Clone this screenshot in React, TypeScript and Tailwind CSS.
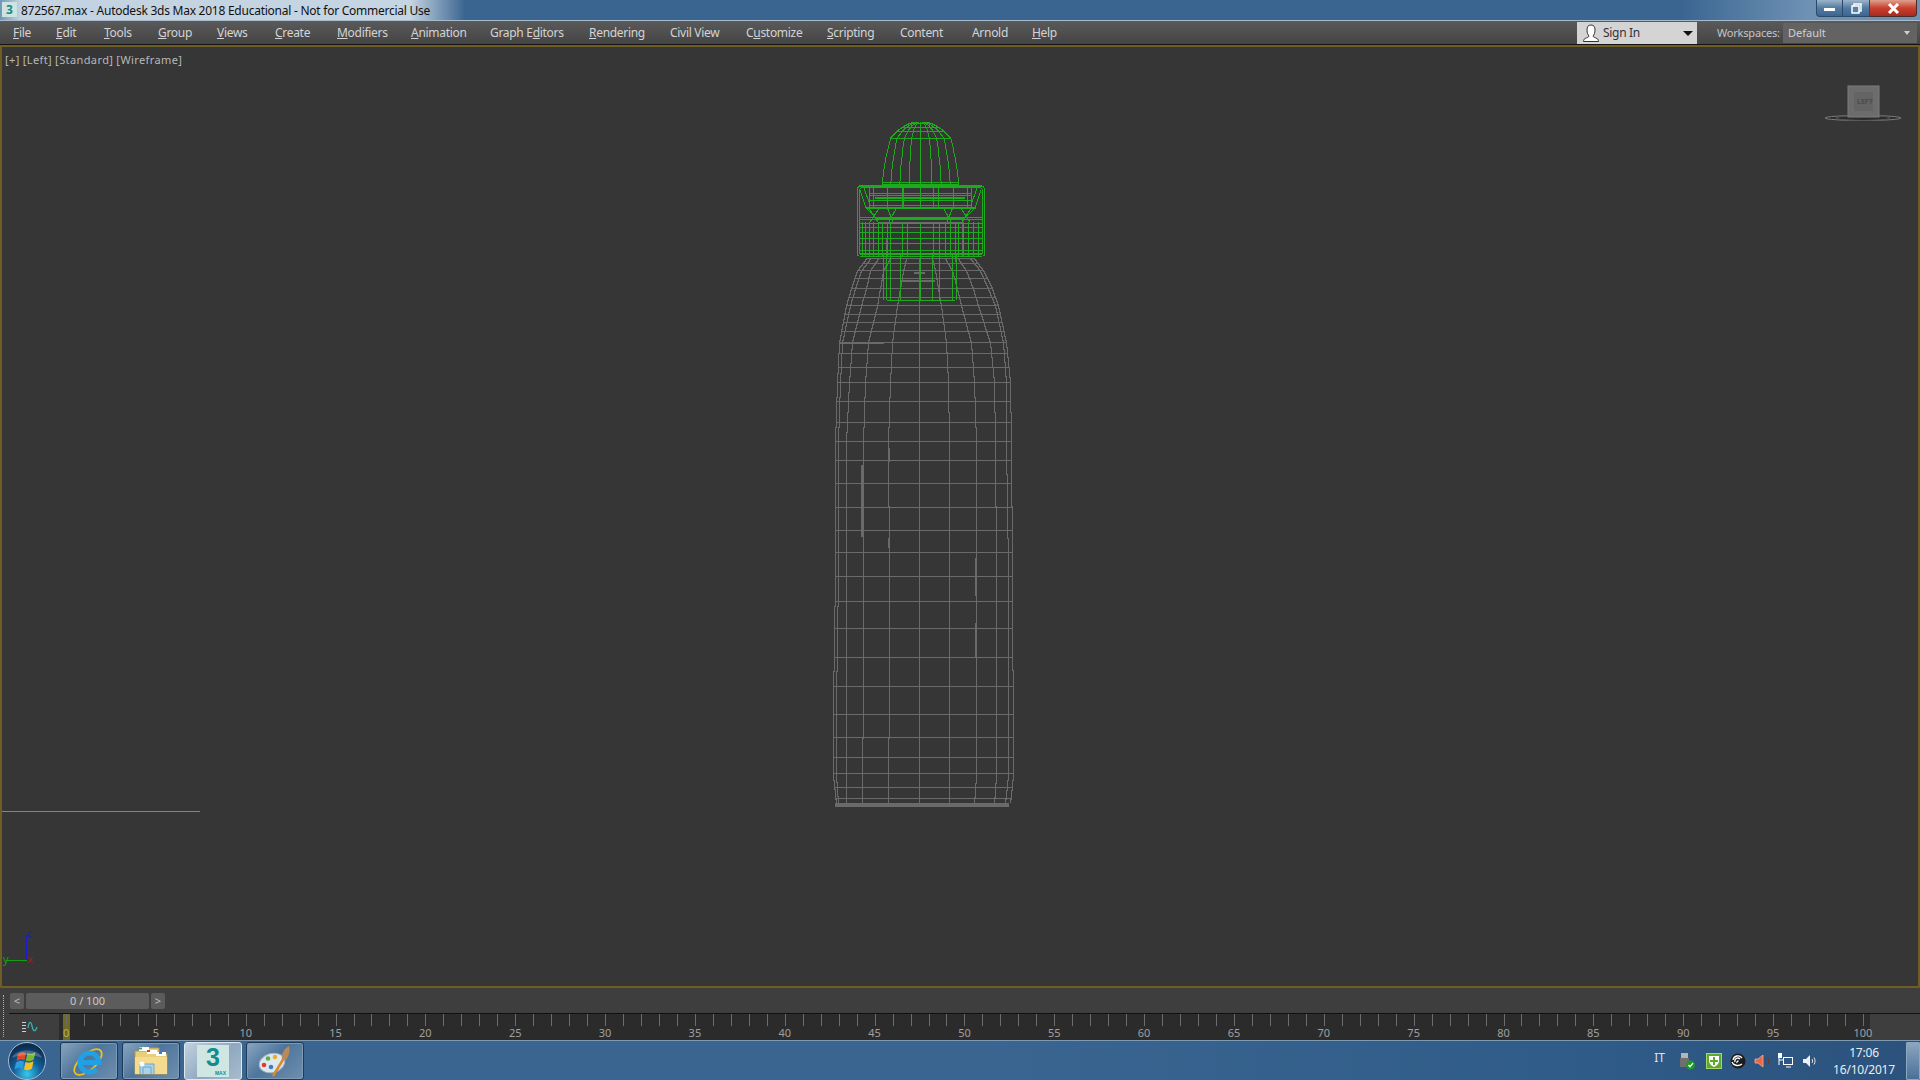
import React from "react";

const FONT = "font-['Noto_Sans','Open_Sans',sans-serif]";

type Key = [number, number];
const interp = (keys: Key[], y: number) => {
  if (y <= keys[0][0]) return keys[0][1];
  for (let i = 1; i < keys.length; i++) {
    if (y <= keys[i][0]) {
      const [y0, x0] = keys[i - 1];
      const [y1, x1] = keys[i];
      return x0 + ((x1 - x0) * (y - y0)) / (y1 - y0);
    }
  }
  return keys[keys.length - 1][1];
};

const Y = [258, 270, 288, 305, 342, 382, 441, 570, 640, 700, 775, 803];
const make = (xs: number[]): Key[] => Y.map((y, i) => [y, xs[i]]);
const columns: Key[][] = [
  make([866, 857, 851, 846, 839, 837, 835, 835, 834, 833, 833, 836]),
  make([870, 861, 855, 850, 842, 840, 838, 838, 837, 836, 836, 838]),
  make([878, 870, 866, 861, 852, 849, 846, 846, 846, 846, 846, 846]),
  make([890, 883, 880, 877, 868, 865, 863, 863, 863, 863, 862, 862]),
  make([906, 903, 900, 897, 892, 890, 888, 889, 889, 889, 888, 888]),
  make([919, 919, 919, 919, 919, 919, 919, 919, 919, 919, 919, 919]),
  make([932, 935, 938, 941, 946, 948, 949, 949, 949, 949, 949, 949]),
  make([945, 952, 957, 961, 971, 974, 976, 976, 976, 976, 976, 974]),
  make([958, 966, 973, 978, 990, 994, 995, 996, 996, 996, 996, 994]),
  make([970, 980, 988, 995, 1003, 1006, 1006, 1008, 1008, 1008, 1008, 1005]),
  make([974, 983, 992, 998, 1006, 1010, 1011, 1012, 1012, 1013, 1013, 1010]),
];
const rows = [
  258, 263, 270, 278, 288, 297, 305, 314, 322, 331, 342, 353, 367, 382, 401, 422, 441, 460, 483, 507, 530, 552, 576,
  601, 628, 657, 686, 714, 737, 757, 773, 787, 798,
];

const stepped = (keys: Key[], from: number, to: number) => {
  let d = "";
  let prev = -1;
  for (let y = from; y <= to; y++) {
    const x = Math.round(interp(keys, y)) + 0.5;
    if (prev < 0) d += `M${x} ${y}`;
    else if (x !== prev) d += `L${prev} ${y}L${x} ${y}`;
    prev = x;
  }
  d += `L${prev} ${to}`;
  return d;
};
const bodyPath = columns.map((c) => stepped(c, 258, 803)).join("");
const rowPath = rows
  .map((y) => `M${Math.round(interp(columns[0], y))} ${y + 0.5}L${Math.round(interp(columns[10], y))} ${y + 0.5}`)
  .join("");

const domeHw: Key[] = [
  [122, 6],
  [124, 12],
  [127, 18],
  [131, 23],
  [138, 30],
  [150, 33],
  [165, 36],
  [182, 38],
];
const domePath = [-1, -0.78, -0.54, -0.3, 0, 0.3, 0.54, 0.78, 1]
  .map((s) => {
    let d = "";
    for (let y = 122; y <= 186; y += 2) {
      const x = Math.round(920 + s * interp(domeHw, y)) + 0.5;
      d += `${d ? "L" : "M"}${x} ${y}`;
    }
    return d;
  })
  .join("");
const domeRows = [123, 127, 131, 138, 182, 184]
  .map((y) => {
    const h = interp(domeHw, y);
    return `M${Math.round(920 - h)} ${y + 0.5}L${Math.round(920 + h)} ${y + 0.5}`;
  })
  .join("");
const capRowsUpper = [193, 195, 200, 205]
  .map((y) => `M870 ${y + 0.5}L972 ${y + 0.5}`)
  .join("");
const capRows = [217, 219, 223, 227, 232, 238, 243, 250]
  .map((y) => `M859 ${y + 0.5}L982 ${y + 0.5}`)
  .join("");
const capLow = [857, 862, 865, 869, 873, 878, 882, 887, 890, 902, 907, 920, 933, 939, 945, 950, 955, 958, 963, 968, 973, 978, 984]
  .map((x) => `M${x + 0.5} 222L${x + 0.5} 256`)
  .join("");
const capUp = [869, 873, 887, 902, 903, 920, 933, 938, 953, 967, 971]
  .map((x) => `M${x + 0.5} 187L${x + 0.5} 208`)
  .join("");
const neck = [883, 886, 890, 900, 920, 932, 939, 952, 956]
  .map((x) => `M${x + 0.5} 254L${x + 0.5} 300`)
  .join("");
const crosses =
  "M868 207L878 222M880 207L870 222M887 207L893 222M897 207L889 222M972 207L962 222M960 207L970 222M953 207L947 222M943 207L951 222M860 190L866 208L875 217M981 190L975 208L966 217M864 188L870 205M977 188L971 205";

const menu: { pre: string; u: string; post: string; w: string }[] = [
  { pre: "", u: "F", post: "ile", w: "w-[43px]" },
  { pre: "", u: "E", post: "dit", w: "w-[48px]" },
  { pre: "", u: "T", post: "ools", w: "w-[54px]" },
  { pre: "", u: "G", post: "roup", w: "w-[59px]" },
  { pre: "", u: "V", post: "iews", w: "w-[58px]" },
  { pre: "", u: "C", post: "reate", w: "w-[62px]" },
  { pre: "", u: "M", post: "odifiers", w: "w-[74px]" },
  { pre: "", u: "A", post: "nimation", w: "w-[79px]" },
  { pre: "Graph E", u: "d", post: "itors", w: "w-[99px]" },
  { pre: "", u: "R", post: "endering", w: "w-[81px]" },
  { pre: "Civil View", u: "", post: "", w: "w-[76px]" },
  { pre: "C", u: "u", post: "stomize", w: "w-[81px]" },
  { pre: "", u: "S", post: "cripting", w: "w-[73px]" },
  { pre: "Content", u: "", post: "", w: "w-[72px]" },
  { pre: "Arnold", u: "", post: "", w: "w-[60px]" },
  { pre: "", u: "H", post: "elp", w: "w-[40px]" },
];

function Wireframe() {
  return (
    <svg className="absolute inset-0 h-full w-full" viewBox="2 47 1916 939" fill="none">
      <g stroke="#6a6a6a" strokeWidth="1" shapeRendering="crispEdges">
        <path d={bodyPath} />
        <path d={rowPath} />
        <path d="M839 342.5L884 342.5" strokeWidth="2" />
        <path d="M862 465L862 537M888.5 448L888.5 462M888.5 538L888.5 548M976 558L976 596M976 623L976 657" strokeWidth="2" />
        <path d="M835 805L1009 805" strokeWidth="4" />
        <path d="M878 222.5L962 222.5M884 238.5L955 238.5M878.5 222L878.5 256M962.5 222L962.5 256M886.5 238L886.5 262M955.5 238L955.5 262" />
        <path d="M902 280.5L935 280.5M914 272.5L925 272.5" strokeWidth="2" />
      </g>
      <g stroke="#1dab1d" strokeWidth="1" shapeRendering="crispEdges">
        <path d={domePath} />
        <path d={domeRows} />
        <path d={neck} />
        <path d="M887 300.5L955 300.5M882 256.5L958 256.5" />
        <rect x="857.5" y="185.5" width="127" height="71" rx="4" />
        <rect x="859.5" y="187.5" width="123" height="67" rx="3" />
        <path d={capRowsUpper} />
        <path d={capRows} />
        <path d={capLow} />
        <path d={capUp} />
        <path d={crosses} />
        <path d="M859 186L982 186M875 198L965 198M866 208L976 208M875 218L965 218M860 254L982 254" strokeWidth="2" />
      </g>
      <path d="M2 811.5L200 811.5" stroke="#59b01e" strokeWidth="1" shapeRendering="crispEdges" />
      <path d="M26.5 935L26.5 960.5" stroke="#1a1ad0" shapeRendering="crispEdges" />
      <path d="M6 960.5L26.5 960.5" stroke="#12a012" shapeRendering="crispEdges" />
      <ellipse cx="1863" cy="118" rx="38" ry="2.5" stroke="#7c7c7c" fill="#2c2c2c" />
      <ellipse cx="1863" cy="118" rx="27" ry="2.5" stroke="#565656" />
      <rect x="1848" y="86" width="31" height="31" fill="#6c6c6c" stroke="#7d7d7d" />
      <rect x="1854" y="92" width="19" height="19" fill="#646464" />
    </svg>
  );
}

function Orb() {
  return (
    <svg width="40" height="40" viewBox="0 0 40 40">
      <defs>
        <radialGradient id="orb" cx="50%" cy="85%" r="75%">
          <stop offset="0" stopColor="#39c8ee" />
          <stop offset="0.5" stopColor="#125f98" />
          <stop offset="1" stopColor="#0d2d50" />
        </radialGradient>
      </defs>
      <circle cx="20" cy="20" r="18.5" fill="url(#orb)" stroke="#a9bccd" strokeWidth="1" />
      <path d="M11 13c3-2 5-2 8-1l-1.5 7c-3-1-5-1-8 1z" fill="#e8482a" />
      <path d="M20.5 12c3 1 5 1 8-1l-1.7 7.500c-3 2-5 2-8 1z" fill="#7fb82c" />
      <path d="M9 21.500c3-2 5-2 8-1l-1.500 7c-3-1-5-1-8 1z" fill="#2f9be0" />
      <path d="M18.500 21c3 1 5 1 8-1l-1.500 7.500c-3 2-5 2-8 1z" fill="#f4c023" />
      <path d="M5 17c3-10 27-10 30 0-8-4-22-4-30 0z" fill="#ffffff" opacity="0.22" />
    </svg>
  );
}

function IE() {
  return (
    <svg width="32" height="32" viewBox="0 0 32 32" fill="none">
      <ellipse cx="15" cy="17" rx="17" ry="8" transform="rotate(-42 15 17)" stroke="#eec21e" strokeWidth="1.800" />
      <path d="M7 17.500H26A9.500 9.500 0 1 0 23.500 24" stroke="#22a0e4" strokeWidth="5" />
    </svg>
  );
}

function Folder() {
  return (
    <svg width="34" height="30" viewBox="0 0 34 30">
      <path d="M1 5h11l2-3h11v6h8v20H1z" fill="#e9cf7a" stroke="#b7994a" strokeWidth="1" />
      <rect x="5" y="1" width="10" height="4" fill="#ffffff" />
      <rect x="5" y="1.500" width="3" height="2" fill="#2fb24a" />
      <rect x="13" y="4" width="10" height="4" fill="#ffffff" />
      <rect x="13" y="4" width="3" height="2" fill="#d8402a" />
      <rect x="22" y="6" width="10" height="4" fill="#ffffff" />
      <rect x="25" y="6" width="3" height="2" fill="#2f7fe0" />
      <path d="M1 11h32v17H1z" fill="#f3dc90" />
      <path d="M6 28V18h14v10M9 28v-7h8v7" fill="#a9d3ea" stroke="#6fa7c8" strokeWidth="1" />
      <circle cx="8" cy="18" r="2.500" fill="#ffffff" opacity="0.9" />
    </svg>
  );
}

function Palette() {
  return (
    <svg width="34" height="32" viewBox="0 0 34 32">
      <ellipse cx="14" cy="18" rx="13" ry="9.500" fill="#dfe7ee" stroke="#9fb2c2" strokeWidth="1" transform="rotate(-15 14 18)" />
      <circle cx="6" cy="20" r="2.300" fill="#d8402a" />
      <circle cx="10" cy="13.500" r="2.300" fill="#5bb04a" />
      <circle cx="17" cy="12" r="2.300" fill="#e2b32a" />
      <circle cx="13" cy="22" r="2.300" fill="#3b7fc2" />
      <path d="M15 31l11-18" stroke="#d98a2a" strokeWidth="2.500" />
      <path d="M24 14c-1-5 2-10 7-13 1 3 1 8-3 14z" fill="#b88a5a" />
    </svg>
  );
}

function TaskBtn({ active, children }: { active?: boolean; children: React.ReactNode }) {
  return (
    <div
      className={
        active
          ? "flex h-[38px] w-[58px] items-center justify-center rounded-[3px] border border-[#dfe8ef] bg-[linear-gradient(135deg,#c3d2de,#8ea8c0_55%,#a9bccd)]"
          : "flex h-[38px] w-[58px] items-center justify-center rounded-[3px] border border-[#1d3a58] bg-[linear-gradient(135deg,#8aa6c0,#4e759c_45%,#6f8fae)] shadow-[inset_0_0_0_1px_#7e9ab5]"
      }
    >
      {children}
    </div>
  );
}

export default function App() {
  return (
    <div className={`flex h-[1080px] w-[1920px] flex-col overflow-hidden bg-[#363636] ${FONT}`}>
      {/* title bar */}
      <div className="flex h-[21px] shrink-0 items-start border-b border-[#a8bbcd] bg-[linear-gradient(90deg,#6f97b8_0,#c2d2e0_20px,#c6d5e2_410px,#3a6591_465px,#3a6591_1680px,#6f92b4_1810px)]">
        <div className="ml-[2px] mt-[2px] flex h-[15px] w-[15px] items-center justify-center bg-[#cfe3e0] text-[12px] font-bold leading-none text-[#0f8c8c]">3</div>
        <div className="ml-[4px] text-[12px] leading-[21px] tracking-[-0.25px] text-[#111]">872567.max - Autodesk 3ds Max 2018 Educational - Not for Commercial Use</div>
        <div className="ml-auto mr-[3px] flex h-[17px]">
          <div className="flex w-[27px] items-center justify-center rounded-bl-[4px] border border-t-0 border-[#2c4a68] bg-[linear-gradient(#9db4ca,#527aa2_50%,#3c6591)]">
            <div className="mt-[3px] h-[3px] w-[11px] bg-white" />
          </div>
          <div className="flex w-[27px] items-center justify-center border-b border-r border-[#2c4a68] bg-[linear-gradient(#9db4ca,#527aa2_50%,#3c6591)]">
            <svg width="11" height="11" viewBox="0 0 11 11" fill="none" stroke="#fff" strokeWidth="1.500">
              <rect x="3" y="1" width="7" height="7" />
              <rect x="1" y="3" width="7" height="7" fill="#5a82a8" />
            </svg>
          </div>
          <div className="flex w-[47px] items-center justify-center rounded-br-[4px] border-b border-r border-[#4a2c2c] bg-[linear-gradient(#e0a090,#c8412e_50%,#a82a1e)]">
            <svg width="13" height="11" viewBox="0 0 13 11" stroke="#fff" strokeWidth="3">
              <path d="M2 1l9 9M11 1l-9 9" />
            </svg>
          </div>
        </div>
      </div>

      {/* menu bar */}
      <div className="flex h-[24px] shrink-0 items-center border-b border-[#141414] bg-[linear-gradient(#5a5a5a,#444444)] pl-[13px]">
        {menu.map((m) => (
          <div key={m.pre + m.u + m.post} className={`${m.w} shrink-0 whitespace-nowrap text-[12px] tracking-[-0.3px] text-[#d4d4d4]`}>
            {m.pre}
            {m.u ? <u>{m.u}</u> : null}
            {m.post}
          </div>
        ))}
        <div className="ml-auto flex h-[22px] w-[120px] items-center self-end bg-[#d4d4d4] pl-[5px] pr-[3px]">
          <svg width="18" height="18" viewBox="0 0 18 18" fill="#fff" stroke="#333" strokeWidth="1">
            <path d="M9 1c3 0 4 2 4 5s-1 5-2 6c0 1 2 1.500 4 2.500 1 .5 1.500 2 1.500 3H1.500c0-1 .5-2.500 1.500-3 2-1 4-1.500 4-2.500-1-1-2-3-2-6s1-5 4-5z" />
          </svg>
          <span className="ml-[3px] text-[12px] tracking-[-0.3px] text-[#333]">Sign In</span>
          <div className="ml-auto mr-[1px] h-0 w-0 border-x-[5px] border-t-[5px] border-x-transparent border-t-[#111]" />
        </div>
        <div className="ml-[20px] mt-[2px] w-[66px] text-[11px] tracking-[-0.2px] text-[#c4c4c4]">Workspaces:</div>
        <div className="mr-[3px] mt-[1px] flex h-[20px] w-[134px] items-center bg-[#636363] pl-[5px] pr-[7px]">
          <span className="text-[11px] text-[#d0d0d0]">Default</span>
          <div className="ml-auto h-0 w-0 border-x-[3px] border-t-[4px] border-x-transparent border-t-[#d0d0d0]" />
        </div>
      </div>

      {/* viewport */}
      <div className="relative min-h-0 flex-1 border-x-2 border-y-2 border-[#6f5e23] bg-[#363636]">
        <Wireframe />
        <div className="absolute left-[3px] top-[5px] flex gap-[3px] whitespace-nowrap text-[11px] tracking-[0.4px] text-[#b8b8b8]">
          <span>[+]</span>
          <span>[Left]</span>
          <span>[Standard]</span>
          <span>[Wireframe]</span>
        </div>
        <span className="absolute left-[1855px] top-[51px] text-[7px] font-bold leading-none text-[#4c4c4c]">LEFT</span>
        <span className="absolute left-[24px] top-[880px] text-[11px] leading-none text-[#1a1ad0]">z</span>
        <span className="absolute left-[1px] top-[906px] text-[11px] leading-none text-[#12a012]">y</span>
        <span className="absolute left-[25px] top-[906px] text-[11px] leading-none text-[#a81818]">x</span>
      </div>

      {/* time controls */}
      <div className="flex h-[52px] shrink-0 bg-[#3e3e3e]">
        <div className="ml-[3px] mr-[5px] mt-[7px] h-[42px] w-px border-l border-dotted border-[#b0b0b0]" />
        <div className="flex min-w-0 flex-1 flex-col">
          <div className="flex h-[25px] items-center gap-[2px] pl-[1px] pt-[1px]">
            <div className="flex h-[16px] w-[14px] items-center justify-center rounded-[2px] bg-[#5c5c5c] text-[11px] text-[#c0c0c0]">&lt;</div>
            <div className="flex h-[16px] w-[123px] items-center justify-center rounded-[2px] bg-[#5c5c5c] text-[11px] text-[#c8c8c8]">0 / 100</div>
            <div className="flex h-[16px] w-[14px] items-center justify-center rounded-[2px] bg-[#5c5c5c] text-[11px] text-[#c0c0c0]">&gt;</div>
          </div>
          <div className="flex h-[27px] border-t border-[#111]">
            <div className="flex w-[50px] shrink-0 items-center justify-center pr-[8px]">
              <svg width="16" height="12" viewBox="0 0 16 12" fill="none">
                <path d="M0 1.500h4M0 4.500h4M0 7.500h4M0 10.500h4" stroke="#d0d0d0" />
                <path d="M6 7C7 0 9 0 10 5s3 7 5 1" stroke="#37b0b0" strokeWidth="1.300" />
              </svg>
            </div>
            <div className="relative flex w-[1811px] shrink-0 bg-[#2b2b2b] pl-[7px]">
              <div className="absolute bottom-0 left-[4px] top-0 w-[7px] bg-[#6f6a25]" />
              {Array.from({ length: 101 }, (_, i) => (
                <div key={i} className="relative w-[17.97px] shrink-0">
                  <div className="h-[12px] w-px bg-[#6c6c6c]" />
                  {i % 5 === 0 ? (
                    <span className={i === 0 ? "absolute left-[-3px] top-[12px] text-[11px] leading-[14px] text-[#b5b060]" : "absolute left-0 top-[12px] -translate-x-1/2 text-[11px] leading-[14px] text-[#a0a0a0]"}>
                      {i}
                    </span>
                  ) : null}
                </div>
              ))}
            </div>
          </div>
        </div>
      </div>

      {/* taskbar */}
      <div className="flex h-[40px] shrink-0 items-center border-t border-[#7f9ab3] bg-[linear-gradient(90deg,#3a6591,#3a6591_1000px,#2f5b88_1600px,#2b527c)]">
        <div className="ml-[7px] mr-[13px] flex h-[40px] w-[40px] items-center justify-center">
          <Orb />
        </div>
        <div className="flex gap-[4px]">
          <TaskBtn>
            <IE />
          </TaskBtn>
          <TaskBtn>
            <Folder />
          </TaskBtn>
          <TaskBtn active>
            <div className="flex h-[32px] w-[32px] flex-col bg-[#cfe6e2] font-['Liberation_Sans',sans-serif]">
              <span className="text-center text-[25px] font-bold leading-[25px] text-[#118c90]">3</span>
              <span className="pr-[3px] text-right text-[5px] font-bold leading-[7px] text-[#118c90]">MAX</span>
            </div>
          </TaskBtn>
          <TaskBtn>
            <Palette />
          </TaskBtn>
        </div>
        <div className="ml-auto flex h-full items-center text-[#dbe4ec]">
          <div className="mb-[6px] w-[25px] text-center text-[12px]">IT</div>
          <div className="flex w-[30px] justify-center">
            <svg width="18" height="18" viewBox="0 0 18 18">
              <rect x="3" y="1" width="7" height="6" fill="#b5b5b5" />
              <rect x="2" y="6" width="9" height="9" fill="#6f6f6f" />
              <circle cx="12.500" cy="13" r="4.500" fill="#1f9a2a" />
              <path d="M10.500 13l1.500 1.700 3-3.500" stroke="#fff" strokeWidth="1.300" fill="none" />
            </svg>
          </div>
          <div className="flex w-[24px] justify-center">
            <div className="flex h-[16px] w-[16px] items-center justify-center border border-[#a9d66a] bg-[#5eaa2e]">
              <svg width="10" height="12" viewBox="0 0 10 12">
                <path d="M0 1h10v5c0 3-3 5-5 6-2-1-5-3-5-6z" fill="#fff" />
                <path d="M4 2h2v3h3v2H6v3H4V7H1V5h3z" fill="#5eaa2e" />
              </svg>
            </div>
          </div>
          <div className="flex w-[24px] justify-center">
            <svg width="16" height="16" viewBox="0 0 16 16" fill="none">
              <circle cx="8" cy="8" r="7.500" fill="#1c1c1c" />
              <path d="M3 7a5 5 0 0 1 9-2M5 9a3 3 0 0 1 5-3M7 10a1.500 1.500 0 0 1 1.500-2M2 9c1 3 6 5 10 2" stroke="#fff" strokeWidth="1.300" />
            </svg>
          </div>
          <div className="flex w-[24px] justify-center">
            <svg width="16" height="16" viewBox="0 0 16 16" fill="none">
              <path d="M1 6h3l5-4v12l-5-4H1z" fill="#e8674a" stroke="#f5c0a8" strokeWidth="0.700" />
              <path d="M11 5c1 2 1 4 0 6M13.500 4c1.500 2 1.500 6 0 8" stroke="#6b3a30" />
            </svg>
          </div>
          <div className="flex w-[24px] justify-center">
            <svg width="16" height="16" viewBox="0 0 16 16" fill="none" stroke="#fff">
              <rect x="5.500" y="4.500" width="9" height="7" />
              <path d="M1 2v10M1 7h4M8 14h5" />
              <rect x="0.500" y="0.500" width="3" height="4" fill="#fff" />
            </svg>
          </div>
          <div className="flex w-[24px] justify-center">
            <svg width="16" height="16" viewBox="0 0 16 16" fill="none">
              <path d="M1 6h3l4-4v12l-4-4H1z" fill="#f0f0f0" />
              <path d="M10 6c.7 1 .7 3 0 4M12 4.500c1.400 2 1.400 5 0 7" stroke="#e0e0e0" />
            </svg>
          </div>
          <div className="flex w-[84px] flex-col items-center text-[12px] leading-[17px] tracking-[-0.2px] text-[#e8eef3]">
            <span>17:06</span>
            <span>16/10/2017</span>
          </div>
          <div className="h-[38px] w-[14px] rounded-[1px] border border-[#8fa7bd] bg-[linear-gradient(#8aa6c0,#4a7098)]" />
        </div>
      </div>
    </div>
  );
}
